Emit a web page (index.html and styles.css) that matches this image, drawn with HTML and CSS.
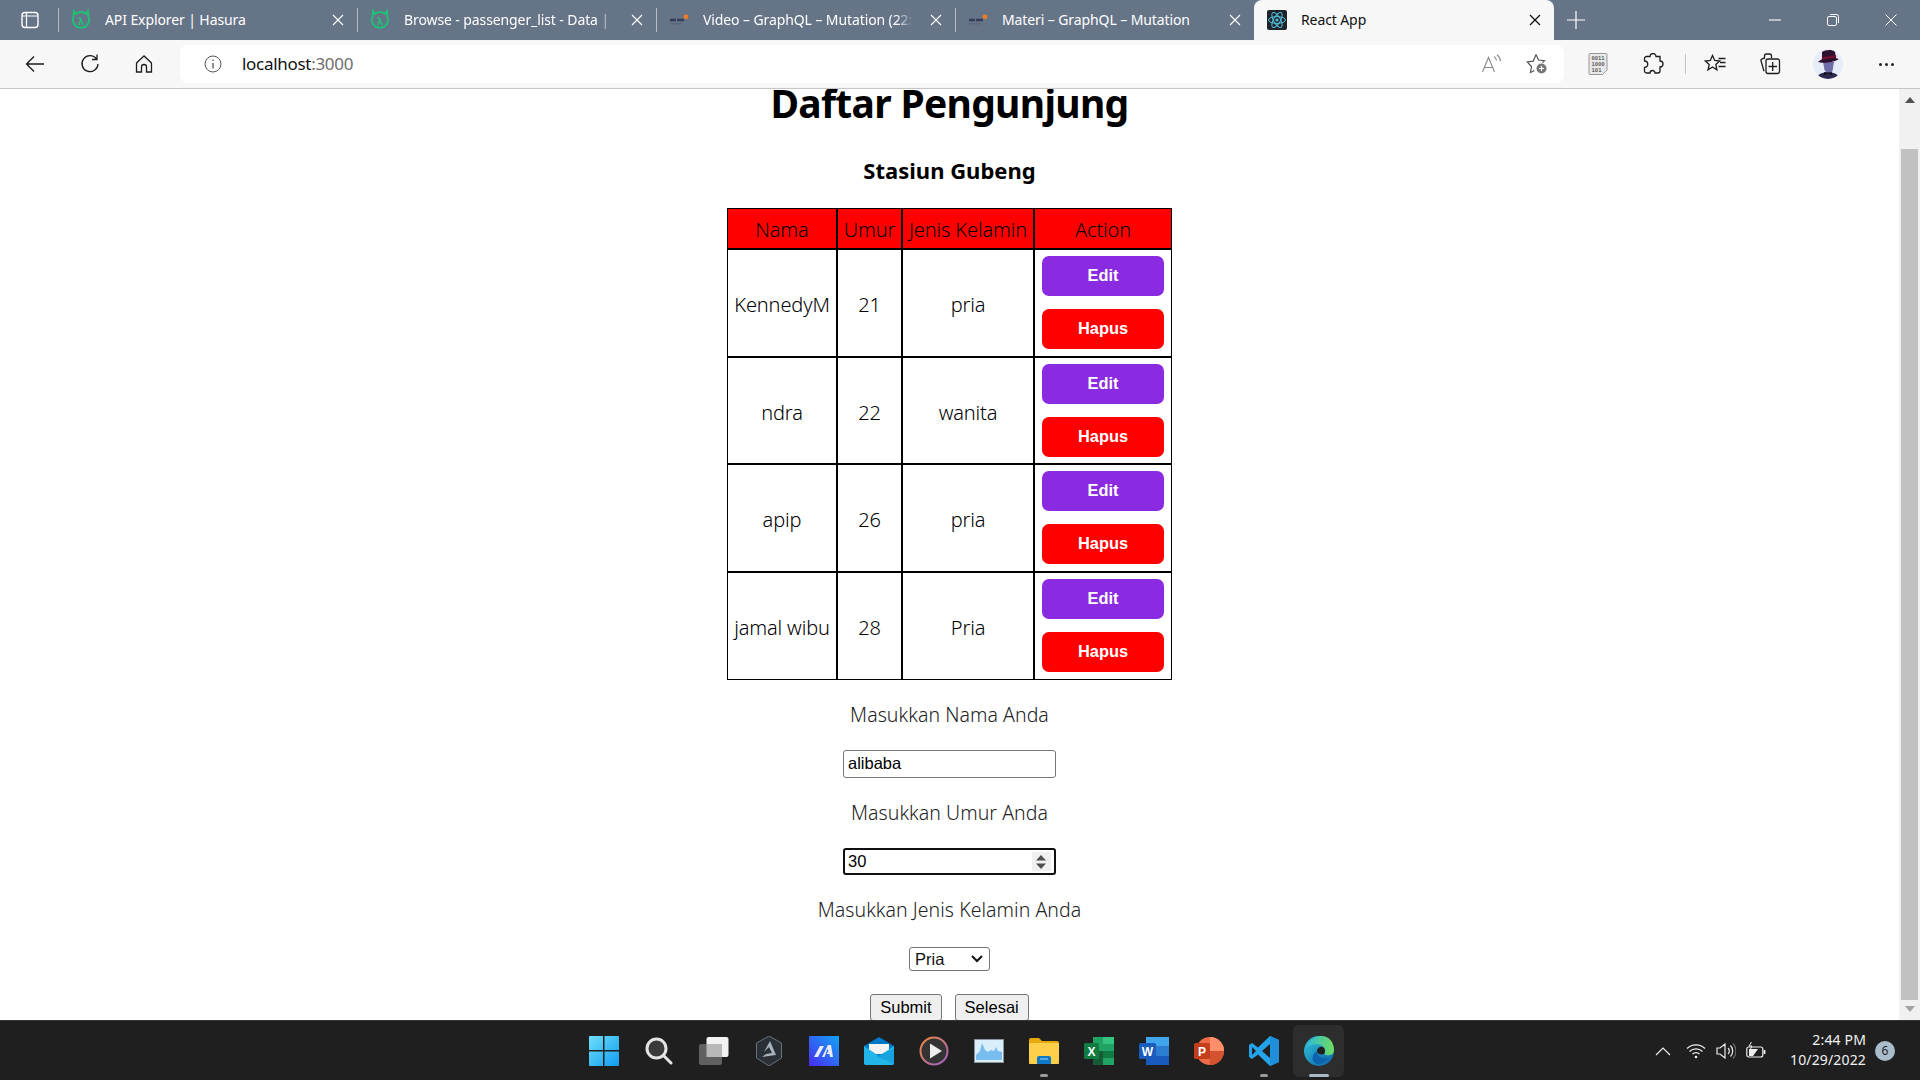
FILE: index.html
```html
<!DOCTYPE html>
<html lang="id">
<head>
<meta charset="utf-8">
<title>React App</title>
<link rel="stylesheet" href="styles.css">
</head>
<body>
<div class="screen">
  <div class="tabstrip">
    <div class="tab-sidebar"><svg width="20" height="20" viewBox="0 0 20 20" fill="none" stroke="#fff" stroke-width="1.4"><rect x="2" y="2.5" width="16" height="15" rx="3"/><path d="M6.5 3v14M2.5 6h15" stroke-width="1.2"/></svg></div>
    <div class="tab tab-first">
      <svg class="fav" width="20" height="22" viewBox="0 0 20 22" fill="none" stroke="#1fbf75" stroke-width="2"><path d="M3 2l2 3a7.5 7.5 0 0 1 10 0l2-3 .5 6A8 8 0 1 1 2.500 8z"/><text x="10" y="16" text-anchor="middle" class="fav-l">λ</text></svg>
      <span class="tab-title">API Explorer | Hasura</span><span class="tab-x"><svg width="12" height="12" viewBox="0 0 12 12" stroke="#fff" stroke-width="1.1"><path d="M1 1l10 10M11 1L1 11"/></svg></span>
    </div>
    <div class="tab">
      <svg class="fav" width="20" height="22" viewBox="0 0 20 22" fill="none" stroke="#1fbf75" stroke-width="2"><path d="M3 2l2 3a7.5 7.5 0 0 1 10 0l2-3 .5 6A8 8 0 1 1 2.500 8z"/><text x="10" y="16" text-anchor="middle" class="fav-l">λ</text></svg>
      <span class="tab-title fade">Browse - passenger_list - Data | Hasura</span><span class="tab-x"><svg width="12" height="12" viewBox="0 0 12 12" stroke="#fff" stroke-width="1.1"><path d="M1 1l10 10M11 1L1 11"/></svg></span>
    </div>
    <div class="tab">
      <svg class="fav" width="20" height="14" viewBox="0 0 20 14"><path d="M1 5.700h6v2.600H1zM8 5.700h7v2.600H8z" fill="#2a3350" opacity=".85"/><rect x="1" y="10" width="12" height="1.500" fill="#59617a" opacity=".7"/><circle cx="17" cy="3.800" r="2.400" fill="#f47b20"/></svg>
      <span class="tab-title fade">Video – GraphQL – Mutation (22:14)</span><span class="tab-x"><svg width="12" height="12" viewBox="0 0 12 12" stroke="#fff" stroke-width="1.1"><path d="M1 1l10 10M11 1L1 11"/></svg></span>
    </div>
    <div class="tab">
      <svg class="fav" width="20" height="14" viewBox="0 0 20 14"><path d="M1 5.700h6v2.600H1zM8 5.700h7v2.600H8z" fill="#2a3350" opacity=".85"/><rect x="1" y="10" width="12" height="1.500" fill="#59617a" opacity=".7"/><circle cx="17" cy="3.800" r="2.400" fill="#f47b20"/></svg>
      <span class="tab-title">Materi – GraphQL – Mutation</span><span class="tab-x"><svg width="12" height="12" viewBox="0 0 12 12" stroke="#fff" stroke-width="1.1"><path d="M1 1l10 10M11 1L1 11"/></svg></span>
    </div>
    <div class="tab tab-active">
      <svg class="fav" width="20" height="20" viewBox="0 0 20 20" fill="none" stroke="#53c1de" stroke-width="1"><rect width="20" height="20" rx="2" fill="#20232a" stroke="none"/><ellipse cx="10" cy="10" rx="8.500" ry="3.400"/><ellipse cx="10" cy="10" rx="8.500" ry="3.400" transform="rotate(60 10 10)"/><ellipse cx="10" cy="10" rx="8.500" ry="3.400" transform="rotate(120 10 10)"/><circle cx="10" cy="10" r="1.600" fill="#53c1de" stroke="none"/></svg>
      <span class="tab-title">React App</span><span class="tab-x"><svg width="12" height="12" viewBox="0 0 12 12" stroke="#111" stroke-width="1.300"><path d="M1 1l10 10M11 1L1 11"/></svg></span>
    </div>
    <div class="tab-new"><svg width="18" height="18" viewBox="0 0 18 18" stroke="#fff" stroke-width="1.2"><path d="M9 0v18M0 9h18"/></svg></div>
    <div class="win-controls">
      <svg width="12" height="12" viewBox="0 0 12 12" stroke="#fff" stroke-width="1.1"><path d="M0 6h12"/></svg>
      <svg width="12" height="12" viewBox="0 0 12 12" fill="none" stroke="#fff" stroke-width="1"><rect x=".5" y="2.500" width="9" height="9" rx="1.500"/><path d="M3 .5h6.500a2 2 0 0 1 2 2V9"/></svg>
      <svg width="12" height="12" viewBox="0 0 12 12" stroke="#fff" stroke-width="1"><path d="M.5.5l11 11M11.500.5l-11 11"/></svg>
    </div>
  </div>

  <div class="toolbar">
    <div class="nav-icons">
      <svg width="20" height="18" viewBox="0 0 20 18" fill="none" stroke="#1c1c1c" stroke-width="1.300"><path d="M19 9H1.500M9 1.500L1.500 9 9 16.500"/></svg>
      <svg width="20" height="20" viewBox="0 0 20 20" fill="none" stroke="#1c1c1c" stroke-width="1.300"><path d="M16.500 5A8 8 0 1 0 18 10M17 .5V5.500H12"/></svg>
      <svg width="18" height="20" viewBox="0 0 18 20" fill="none" stroke="#1c1c1c" stroke-width="1.300"><path d="M9 2L2 8.500a2 2 0 0 0-.5 1.400V18H6.500v-5a2.500 2.500 0 0 1 5 0v5h5V9.900a2 2 0 0 0-.5-1.400z"/></svg>
    </div>
    <div class="addressbar">
      <svg class="info" width="20" height="20" viewBox="0 0 20 20" fill="none" stroke="#555" stroke-width="1"><circle cx="10" cy="10" r="8"/><path d="M10 9v5.500M10 5.500v1.500" stroke-width="1.300"/></svg>
      <span class="url">localhost<span class="url-port">:3000</span></span>
      <div class="addr-right">
        <svg width="22" height="20" viewBox="0 0 22 20" fill="none" stroke="#8a8a8a" stroke-width="1.100"><path d="M1.500 18L7.500 3.500 13.500 18M3.500 13.500h8M13 2.500a6 6 0 0 1 2.500 4M16 .8a9 9 0 0 1 3.500 6.500"/></svg>
        <svg width="22" height="22" viewBox="0 0 22 22"><path d="M10 1.500l2.500 5.500 6 .7-2 2M8.500 17.500l-4 2 1-6L1.300 9l6-.9L10 1.500" fill="none" stroke="#555" stroke-width="1.200"/><circle cx="15.500" cy="15.500" r="5" fill="#777"/><path d="M15.500 13v5M13 15.500h5" stroke="#fff" stroke-width="1.200"/></svg>
      </div>
    </div>
    <div class="ext-icons">
      <svg class="ext-bin" width="20" height="22" viewBox="0 0 20 22"><path d="M2 .5h16a1 1 0 0 1 1 1V17l-4.500 4.500H2a1 1 0 0 1-1-1V1.500a1 1 0 0 1 1-1z" fill="#e8e8e8" stroke="#999"/><text x="10" y="7" class="bin-t">0011</text><text x="10" y="13" class="bin-t">1000</text><text x="8.500" y="19" class="bin-t">101</text></svg>
      <svg width="22" height="22" viewBox="0 0 22 22" fill="none" stroke="#1c1c1c" stroke-width="1.300"><path d="M8 3.500a3 3 0 0 1 6 0h4v4.500a3 3 0 0 1 0 6V18a2 2 0 0 1-2 2h-3a2.500 2.500 0 0 0-5 0H4.500a2 2 0 0 1-2-2v-3.500a3 3 0 0 0 0-6.500V5.500a2 2 0 0 1 2-2z"/></svg>
      <span class="toolbar-sep"></span>
      <svg width="22" height="20" viewBox="0 0 22 20" fill="none" stroke="#1c1c1c" stroke-width="1.300"><path d="M8.500 1.500l2.200 5 5 .5-3.900 3.500 1.100 5.300-4.400-2.800-4.500 2.800 1.200-5.300L1.300 7l5-.5zM14.500 4.500h7M16 8.500h5.500M14.500 12.500h7"/></svg>
      <svg width="22" height="22" viewBox="0 0 22 22" fill="none" stroke="#1c1c1c" stroke-width="1.300"><path d="M6 5l-3 .8a1.500 1.500 0 0 0-1 1.900l3 10.500"/><path d="M5.500 5V3a2 2 0 0 1 2-2h3a2 2 0 0 1 2 2v2"/><rect x="7" y="6" width="13.500" height="14.500" rx="2"/><path d="M13.700 9v9M9.500 13.500h8.500"/></svg>
      <svg class="avatar" width="30" height="30" viewBox="0 0 30 30"><defs><clipPath id="av"><circle cx="15" cy="15" r="15"/></clipPath></defs><g clip-path="url(#av)"><rect width="30" height="30" fill="#e6ecf8"/><path d="M10 13h11l-1.500 9-3 3h-2l-3-4z" fill="#6f6ea8"/><path d="M2 31c1-5 8-8 13-8s12 3 13 8z" fill="#2c2a4f"/><path d="M11 23l4 2 4-2v3l-4-1-4 1z" fill="#111"/><path d="M9 3c3-2 10-3 13 0l1 6c2 1 3 1 3 1-4 3-16 5-21 3 1-1 3-2 4-3z" fill="#2e1030"/><path d="M9 8c4 0 10-1 14-2l.3 2C19 9.500 13 10 8.800 10z" fill="#7a1030"/></g></svg>
      <span class="more"><i></i><i></i><i></i></span>
    </div>
  </div>

  <div class="viewport">
    <main class="page">
      <h1 class="title">Daftar Pengunjung</h1>
      <h2 class="subtitle">Stasiun Gubeng</h2>
      <table class="visitors">
        <thead><tr><th class="c-name">Nama</th><th class="c-age">Umur</th><th class="c-sex">Jenis Kelamin</th><th class="c-act">Action</th></tr></thead>
        <tbody>
          <tr><td>KennedyM</td><td>21</td><td>pria</td><td class="actions"><button class="btn btn-edit">Edit</button><button class="btn btn-del">Hapus</button></td></tr>
          <tr><td>ndra</td><td>22</td><td>wanita</td><td class="actions"><button class="btn btn-edit">Edit</button><button class="btn btn-del">Hapus</button></td></tr>
          <tr><td>apip</td><td>26</td><td>pria</td><td class="actions"><button class="btn btn-edit">Edit</button><button class="btn btn-del">Hapus</button></td></tr>
          <tr><td>jamal wibu</td><td>28</td><td>Pria</td><td class="actions"><button class="btn btn-edit">Edit</button><button class="btn btn-del">Hapus</button></td></tr>
        </tbody>
      </table>
      <form class="visitor-form">
        <p class="label">Masukkan Nama Anda</p>
        <input class="field" type="text" value="alibaba">
        <p class="label">Masukkan Umur Anda</p>
        <div class="field field-number"><span>30</span><span class="spin"><svg width="10" height="14" viewBox="0 0 10 14" fill="#505050"><path d="M5 0l5 5.500H0zM0 8.500h10L5 14z"/></svg></span></div>
        <p class="label">Masukkan Jenis Kelamin Anda</p>
        <div class="select-box"><span>Pria</span><svg width="12" height="8" viewBox="0 0 12 8" fill="none" stroke="#111" stroke-width="2"><path d="M1 1l5 5 5-5"/></svg></div>
        <div class="form-buttons"><button type="button" class="form-btn">Submit</button><button type="button" class="form-btn">Selesai</button></div>
      </form>
    </main>
    <div class="scrollbar">
      <span class="arrow-up"></span>
      <span class="thumb"></span>
      <span class="arrow-down"></span>
    </div>
  </div>

  <div class="taskbar">
    <div class="task-icons">
      <span class="ti"><svg width="30" height="30" viewBox="0 0 30 30"><defs><linearGradient id="w" x1="0" y1="0" x2="1" y2="1"><stop offset="0" stop-color="#6fe0fb"/><stop offset="1" stop-color="#0f9cf0"/></linearGradient></defs><path d="M0 1a1 1 0 0 1 1-1h13v14H0zM15.500 0H29a1 1 0 0 1 1 1v13H15.500zM0 15.500h14V30H1a1 1 0 0 1-1-1zM15.500 15.500H30V29a1 1 0 0 1-1 1H15.500z" fill="url(#w)"/></svg></span>
      <span class="ti"><svg width="28" height="28" viewBox="0 0 28 28" fill="#3a3a3a" stroke="#e4e4e4" stroke-width="3"><circle cx="11.500" cy="11.500" r="9.500"/><path d="M18.500 18.500L26 26" stroke-linecap="round"/></svg></span>
      <span class="ti"><svg width="30" height="28" viewBox="0 0 30 28"><rect x="7.500" y="0" width="22" height="20" rx="2" fill="#f2f2f2"/><rect x="0" y="7" width="23" height="21" rx="2" fill="#666" opacity=".92"/><rect x="7.500" y="7" width="15.500" height="13" fill="#b8b8b8"/></svg></span>
      <span class="ti"><svg width="26" height="30" viewBox="0 0 26 30"><path d="M13 0l12.500 7v15L13 30 .5 22V7z" fill="#2a3036" stroke="#69737d"/><path d="M14 5l6 14-14 2 4-3 6-1-3-6-5 5z" fill="#a6b1bb"/></svg></span>
      <span class="ti"><svg width="30" height="30" viewBox="0 0 30 30"><defs><linearGradient id="m" x1="1" y1="0" x2="0" y2="1"><stop offset="0" stop-color="#12a5f5"/><stop offset="1" stop-color="#4a2bf0"/></linearGradient></defs><rect width="30" height="30" fill="url(#m)"/><path d="M5 21l6-11h4l-6 11zM13 21l6-12h3l2 12h-3l-.5-3h-3l2-3-1-2-3 8z" fill="#e9ecff"/></svg></span>
      <span class="ti"><svg width="30" height="28" viewBox="0 0 30 28"><path d="M15 0l15 9v17a2 2 0 0 1-2 2H2a2 2 0 0 1-2-2V9z" fill="#0078c8"/><path d="M5 7h20v10H5z" fill="#f4f4f4"/><path d="M0 9l15 10L30 9v17a2 2 0 0 1-2 2H2a2 2 0 0 1-2-2z" fill="#23b4ea"/><path d="M12 19l18 8V12z" fill="#0f97d8" opacity=".6"/></svg></span>
      <span class="ti"><svg width="30" height="30" viewBox="0 0 30 30"><defs><linearGradient id="p" x1="0" y1="0" x2="1" y2="1"><stop offset="0" stop-color="#f08a3c"/><stop offset="1" stop-color="#9c5fc6"/></linearGradient></defs><circle cx="15" cy="15" r="13.500" fill="#333" stroke="url(#p)" stroke-width="2"/><path d="M11 7.500l12 7.500-12 7.500z" fill="#eee"/></svg></span>
      <span class="ti"><svg width="30" height="24" viewBox="0 0 30 24"><rect x=".5" y=".5" width="29" height="23" fill="#d8eefb" stroke="#8b949c"/><path d="M2 21V16l4-4 2-8 3 7 3 2 3-2 3 1 2-4 2 4 4 1v8z" fill="#78bdf0"/></svg></span>
      <span class="ti ti-dot"><svg width="30" height="26" viewBox="0 0 30 26"><path d="M0 2a2 2 0 0 1 2-2h8l3 3h15a2 2 0 0 1 2 2v21H0z" fill="#e8a90e"/><path d="M0 5h30v19a2 2 0 0 1-2 2H2a2 2 0 0 1-2-2z" fill="#fdcf4a"/><path d="M8 20a2 2 0 0 1 2-2h10a2 2 0 0 1 2 2v6H8z" fill="#0f79c7"/><path d="M11 21h8" stroke="#6fbbe8" stroke-width="1.500"/></svg></span>
      <span class="ti"><svg width="30" height="28" viewBox="0 0 30 28"><path d="M9 0h21v28H9z" fill="#21a366"/><path d="M19 0h11v7H19z" fill="#33c481"/><path d="M9 14h10v14H9z" fill="#185c37"/><path d="M19 14h11v7H19z" fill="#107c41"/><rect y="6" width="15" height="16" rx="1.500" fill="#107c41"/><text x="7.500" y="18.500" text-anchor="middle" class="office-l">X</text></svg></span>
      <span class="ti"><svg width="30" height="28" viewBox="0 0 30 28"><path d="M7 0h23v28H7z" fill="#2b7cd3"/><path d="M7 0h23v9H7z" fill="#41a5ee"/><path d="M7 19h23v9H7z" fill="#185abd"/><rect y="6" width="17" height="16" rx="1.500" fill="#1a5cbe"/><text x="8.500" y="18.500" text-anchor="middle" class="office-l">W</text></svg></span>
      <span class="ti"><svg width="30" height="28" viewBox="0 0 30 28"><circle cx="16" cy="14" r="14" fill="#ed6c47"/><path d="M16 0a14 14 0 0 1 14 14H16z" fill="#ff8f6b"/><path d="M16 14h14a14 14 0 0 1-14 14z" fill="#d35230"/><rect y="6" width="16" height="16" rx="1.500" fill="#c43e1c"/><text x="8" y="18.500" text-anchor="middle" class="office-l">P</text></svg></span>
      <span class="ti ti-dot"><svg width="30" height="30" viewBox="0 0 30 30"><path d="M21 0l9 4v22l-9 4-12-11.500L3 23l-3-2V9l3-2 6 4.500z" fill="#23a3ea"/><path d="M21 8l-8 7 8 7z" fill="#1f1f1f"/><path d="M3 11l4 4-4 4z" fill="#1f1f1f"/><path d="M21 0l9 4v22l-9 4z" fill="#1f8fdc"/></svg></span>
      <span class="ti ti-active"><svg width="30" height="30" viewBox="0 0 30 30"><defs><linearGradient id="e" x1="0" y1="0" x2="1" y2="1"><stop offset="0" stop-color="#32c7d8"/><stop offset="1" stop-color="#0b5ea8"/></linearGradient><linearGradient id="e2" x1="0" y1="0" x2="1" y2="0"><stop offset="0" stop-color="#2dbbd8"/><stop offset="1" stop-color="#6fdc5e"/></linearGradient></defs><circle cx="15" cy="15" r="15" fill="url(#e)"/><path d="M2 12C5 3 13 0 17 0c8 0 13 6 13 14 0 5-5 6-8 5-3-1-1-5-2-7-2-5-13-5-18 0z" fill="url(#e2)"/><path d="M13 15c0-3 3-5 6-4 2 1 2 3 2 5l-1 2c-3 1-7 0-7-3z" fill="#1f1f1f"/><path d="M13 15c0 5 5 8 11 7-3 5-9 8-13 5-4-3-3-9 2-12z" fill="#0d62ad"/></svg></span>
    </div>
    <div class="tray">
      <svg class="tray-up" width="16" height="10" viewBox="0 0 16 10" fill="none" stroke="#eee" stroke-width="1.200"><path d="M1 9l7-7 7 7"/></svg>
      <svg width="20" height="16" viewBox="0 0 20 16" fill="none" stroke="#eee" stroke-width="1.200"><path d="M1 5.500a13 13 0 0 1 18 0M3.500 8.500a9.500 9.500 0 0 1 13 0M6.500 11a5 5 0 0 1 7 0"/><circle cx="10" cy="14" r="1.300" fill="#eee" stroke="none"/></svg>
      <svg width="20" height="18" viewBox="0 0 20 18" fill="none" stroke="#eee" stroke-width="1.200"><path d="M1 6v6h3l5 4V2L4 6zM12 6a4 4 0 0 1 0 6M14.500 3.500a8 8 0 0 1 0 11"/><path d="M17 1.500a11 11 0 0 1 0 15" stroke="#666"/></svg>
      <svg width="20" height="18" viewBox="0 0 20 18" fill="none" stroke="#eee" stroke-width="1.200"><rect x=".8" y="5" width="16" height="10" rx="2"/><path d="M18.500 8v4" stroke-width="1.800"/><path d="M3 14V7h9l-5 7z" fill="#eee" stroke="none"/><path d="M5.500 0L3 4h3L4.500 7" stroke-width="1"/></svg>
      <div class="clock"><span>2:44 PM</span><span>10/29/2022</span></div>
      <span class="badge">6</span>
    </div>
  </div>
</div>
</body>
</html>
```

FILE: styles.css
```css
* { box-sizing: border-box; }
html, body { margin: 0; padding: 0; height: 100%; overflow: hidden; }
body { font-family: "Noto Sans", "Open Sans", sans-serif; color: #000; background: #fff; }
.screen { display: flex; flex-direction: column; width: 1920px; height: 1080px; overflow: hidden; }

/* tabs */
.tabstrip { display: flex; align-items: stretch; height: 40px; flex: none; background: #667488; color: #fff; font-size: 14px; }
.tab-sidebar { width: 58px; display: flex; align-items: center; padding-left: 20px; flex: none; }
.tab { position: relative; width: 299px; display: flex; align-items: center; padding: 0 0 0 13px; flex: none; }
.tab::before { content: ""; position: absolute; left: 0; top: 8px; bottom: 8px; width: 1px; background: #b7bec9; }
.tab-first { width: 299px; }
.tab-active { width: 300px; background: #f7f7f7; color: #111; border-radius: 8px 8px 0 0; padding-left: 13px; }
.tab-active::before { display: none; }
.fav { flex: none; margin-right: 14px; }
.fav-l { font-family: "Noto Sans", sans-serif; font-size: 10px; font-weight: 700; fill: #1fbf75; stroke: none; }
.tab-title { flex: 1; min-width: 0; white-space: nowrap; overflow: hidden; font-size: 14px; line-height: 20px; padding-bottom: 1px; letter-spacing: -.1px; }
.tab-title.fade { -webkit-mask-image: linear-gradient(to right, #000 92%, transparent 100%); mask-image: linear-gradient(to right, #000 92%, transparent 100%); }
.tab-x { flex: none; width: 36px; display: flex; align-items: center; padding-left: 11px; margin-left: 6px; }
.tab-new { width: 44px; padding-left: 13px; display: flex; align-items: center; flex: none; }
.win-controls { margin-left: auto; display: flex; align-items: center; gap: 46px; padding-right: 23px; }

/* toolbar */
.toolbar { display: flex; align-items: center; height: 49px; flex: none; background: #f7f7f7; border-bottom: 1px solid #c6c6c6; }
.nav-icons { display: flex; align-items: center; gap: 35px; padding-left: 25px; width: 180px; flex: none; }
.addressbar { display: flex; align-items: center; width: 1384px; height: 38px; margin-top: -1px; background: #fff; border-radius: 8px; padding: 0 16.500px 0 23px; flex: none; }
.info { margin-right: 19px; flex: none; }
.url { font-size: 17px; letter-spacing: -.3px; color: #111; }
.url-port { color: #6e6e6e; }
.addr-right { margin-left: auto; display: flex; align-items: center; gap: 23px; }
.ext-icons { display: flex; align-items: center; padding-left: 24px; gap: 0; flex: 1; }
.ext-icons > svg { margin-right: 33px; }
.ext-icons > .ext-bin { margin-right: 34px; }
.toolbar-sep { width: 1px; height: 20px; background: #c4c4c4; margin: 0 18.500px 0 -12.500px; }
.bin-t { font-family: "DejaVu Sans Mono", monospace; font-size: 5.500px; font-weight: 700; fill: #666; text-anchor: middle; }
.ext-icons > .avatar { margin-right: 35.500px; margin-left: -1px; }
.more { display: flex; gap: 3px; }
.more i { width: 3px; height: 3px; border-radius: 50%; background: #222; }

/* page */
.viewport { flex: 1; min-height: 0; display: flex; overflow: hidden; background: #fff; }
.page { flex: 1; min-width: 0; display: flex; flex-direction: column; align-items: center; overflow: hidden; }
.title { margin: 0; font-size: 39px; line-height: 28px; font-weight: 700; letter-spacing: -.7px; white-space: nowrap; }
.subtitle { margin: 38px 0 0; font-size: 22px; line-height: 30px; font-weight: 700; }
.visitors { margin-top: 23px; border-collapse: separate; border-spacing: 0; border: 1px solid #000; table-layout: fixed; width: 445px; font-size: 20px; font-weight: 400; }
.visitors th, .visitors td { border-right: 2px solid #000; border-bottom: 2px solid #000; padding: 4px 0 0; text-align: center; font-weight: 300; letter-spacing: -.14px; white-space: nowrap; }
.visitors th { padding-top: 2px; }
.visitors th:last-child, .visitors td:last-child { border-right: 0; }
.visitors tbody tr:last-child td { border-bottom: 0; height: 106.500px; }
.visitors th { background: #f00; height: 41px; }
.visitors td { height: 107.500px; }
.c-name { width: 110px; }
.c-age { width: 65px; }
.c-sex { width: 132px; }
.visitors .actions { padding: 0 7px; }
.btn { display: block; width: 122px; height: 40px; border: 0; border-radius: 7px; color: #fff; font-family: "Liberation Sans", Arial, sans-serif; font-weight: 700; font-size: 16.400px; padding: 0 0 1px; }
.btn + .btn { margin-top: 13px; }
.btn-edit { background: #8a2be2; }
.btn-del { background: #f00; }

/* form */
.visitor-form { display: flex; flex-direction: column; align-items: center; }
.label { margin: 21px 0 0; font-size: 19.500px; font-weight: 300; line-height: 28px; color: #222; letter-spacing: .05px; }
.field { display: block; width: 213px; height: 28px; margin-top: 21px; border: 1px solid #767676; border-radius: 3px; padding: 0 4px 2px; background: #fff; font-family: "Liberation Sans", Arial, sans-serif; font-size: 16.500px; color: #000; }
.field-number { display: flex; align-items: center; justify-content: space-between; height: 27px; border: 2px solid #101010; padding: 0 3px; margin-top: 21px; }
.spin { width: 19px; height: 19px; background: #f0f0f0; display: flex; align-items: center; justify-content: center; }
.select-box { display: flex; align-items: center; justify-content: space-between; width: 81px; height: 24px; margin-top: 23px; border: 1px solid #767676; border-radius: 3px; padding: 0 6px 0 5px; font-family: "Liberation Sans", Arial, sans-serif; font-size: 16.500px; color: #111; }
.form-buttons { display: flex; gap: 13px; margin-top: 23px; }
.form-btn { height: 27px; padding: 0 9px; background: #efefef; border: 1px solid #767676; border-radius: 3px; font-family: "Liberation Sans", Arial, sans-serif; font-size: 16.500px; color: #000; }

/* scrollbar */
.scrollbar { position: relative; width: 21px; flex: none; background: #f1f1f1; display: flex; flex-direction: column; align-items: center; }
.arrow-up { margin-top: 8px; border: 5px solid transparent; border-top: 0; border-bottom: 6px solid #505050; }
.thumb { position: absolute; left: 2px; right: 2px; top: 60px; height: 851px; background: #c1c1c1; }
.arrow-down { position: absolute; bottom: 8px; border: 5px solid transparent; border-bottom: 0; border-top: 6px solid #a3a3a3; }

/* taskbar */
.taskbar { position: relative; display: flex; align-items: center; height: 60px; flex: none; background: #1f1f1f; border-top: 1px solid #333; }
.task-icons { display: flex; align-items: center; margin-left: 576px; }
.ti { position: relative; width: 55px; height: 52px; display: flex; align-items: center; justify-content: center; flex: none; }
.ti-dot::after { content: ""; position: absolute; left: 50%; bottom: 0; width: 8px; height: 3px; margin-left: -4px; border-radius: 2px; background: #9a9a9a; }
.ti-active { background: #2d2d2d; background-clip: padding-box; border-left: 2.500px solid transparent; border-right: 2.500px solid transparent; border-radius: 7px; }
.ti-active::after { content: ""; position: absolute; left: 50%; bottom: 0; width: 20px; height: 3px; margin-left: -10px; border-radius: 2px; background: #a9b8c6; }
.office-l { font-family: "Liberation Sans", Arial, sans-serif; font-weight: 700; font-size: 12px; fill: #fff; }
.tray { margin-left: auto; display: flex; align-items: center; gap: 10px; color: #f2f2f2; }
.tray-up { margin-right: 5px; margin-left: -1px; }
.clock { display: flex; flex-direction: column; align-items: flex-end; font-size: 14px; line-height: 20px; margin: -2px -1px 0 14px; letter-spacing: .15px; }
.badge { width: 20px; height: 20px; margin: 0 25px 0 0; border-radius: 50%; background: #a9bccb; color: #1f1f1f; font-size: 12px; display: flex; align-items: center; justify-content: center; }
```
